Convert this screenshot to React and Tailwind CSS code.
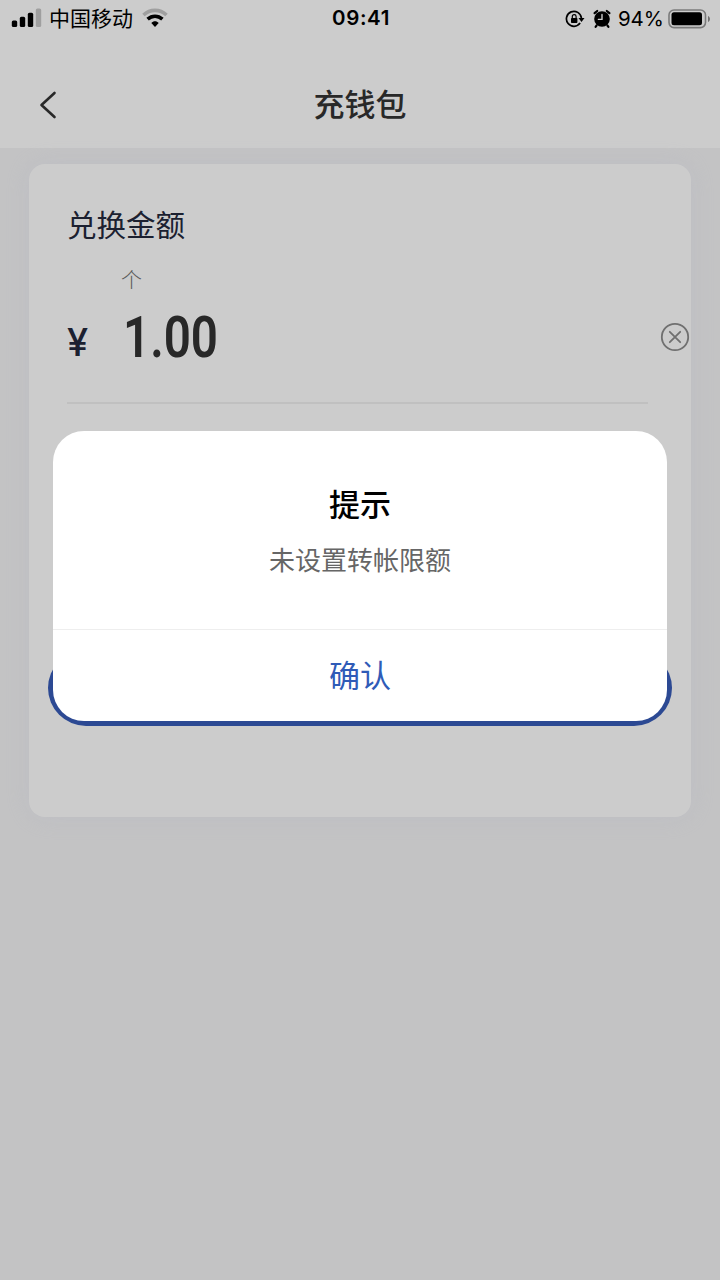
import { useState } from 'react';

export default function App() {
  const [amount, setAmount] = useState('1.00');
  const [open, setOpen] = useState(true);

  return (
    <div className="relative h-[1280px] w-[720px] overflow-hidden bg-[#f4f4f5] font-['Inter','Noto_Sans_CJK_SC',sans-serif]">
      <StatusBar />
      <NavBar title="充钱包" />
      <main className="px-[29px] pt-4">
        <section className="flex h-[653px] flex-col rounded-2xl bg-white pl-[38px] shadow-[0_0_24px_rgba(225,228,245,0.3)]">
          <h2 className="mt-[39px] h-11 text-[29.5px] leading-[44px] text-[#24293c]">兑换金额</h2>
          <span className="ml-[54px] mt-[17px] h-8 text-[21px] font-light leading-[32px] text-[#707070]">个</span>
          <div className="mt-px flex h-20 items-center pr-px">
            <span className="w-[56px] pt-[9px] text-[38px] font-medium leading-[40px] text-[#24293c]">¥</span>
            <span className="flex-1">
              <span className="inline-block origin-left scale-x-[0.82] font-['Roboto',sans-serif] text-[58px] font-semibold leading-[80px] text-[#333]">
                {amount}
              </span>
            </span>
            <button onClick={() => setAmount('')}>
              <ClearIcon />
            </button>
          </div>
          <div className="mr-[43px] mt-[25px] h-0.5 bg-[#f1f1f1]" />
          <button aria-label="确认" className="-ml-[19px] mr-[19px] mt-[246px] h-[76px] rounded-full bg-[#385cb8]" />
        </section>
      </main>
      {open && <Alert title="提示" message="未设置转帐限额" onConfirm={() => setOpen(false)} />}
    </div>
  );
}

function StatusBar() {
  return (
    <div className="grid h-10 grid-cols-3 items-center bg-white pl-[11px] pr-[9px] text-black">
      <div className="mb-[3px] flex items-center">
        <SignalIcon />
        <span className="ml-[7px] mr-[9px] text-[21px] leading-[36px]">中国移动</span>
        <WifiIcon />
      </div>
      <span className="mb-[3px] text-center text-[20.5px] font-semibold leading-none tracking-[0.6px]">09:41</span>
      <div className="mb-[3px] flex items-center justify-end">
        <RotationLockIcon />
        <AlarmIcon />
        <span className="ml-[7px] mr-1 text-[20.5px] leading-[36px]">94%</span>
        <BatteryIcon />
      </div>
    </div>
  );
}

function NavBar({ title }) {
  return (
    <header className="grid h-[108px] grid-cols-3 items-center bg-white px-[39px] pt-[22px]">
      <button className="justify-self-start">
        <svg width="18" height="28" viewBox="0 0 18 28" fill="none" stroke="#333" strokeWidth="2.6" strokeLinecap="round" strokeLinejoin="round">
          <path d="M15.5 2L2.5 14L15.5 26" />
        </svg>
      </button>
      <h1 className="text-center text-[31px] font-medium leading-[44px] text-[#333]">{title}</h1>
    </header>
  );
}

function Alert({ title, message, onConfirm }) {
  return (
    <div className="absolute inset-0 flex items-start justify-center bg-black/20">
      <div className="mt-[431px] flex h-[290px] w-[614px] flex-col rounded-[31px] bg-white text-center">
        <div className="flex-1 pt-[51px]">
          <h3 className="text-[31px] font-medium leading-[46px] text-black">{title}</h3>
          <p className="mt-3.5 text-[26px] leading-[38px] text-[#666]">{message}</p>
        </div>
        <button onClick={onConfirm} className="h-[92px] border-t border-[#eee] pt-0.5 text-[31px] text-[#2f5bb7]">
          确认
        </button>
      </div>
    </div>
  );
}

function ClearIcon() {
  return (
    <svg width="30" height="30" viewBox="0 0 30 30" fill="none" stroke="#8c8c8c" strokeWidth="1.8" strokeLinecap="round">
      <circle cx="15" cy="15" r="13.2" />
      <path d="M9.8 9.8L20.2 20.2M20.2 9.8L9.8 20.2" />
    </svg>
  );
}

function SignalIcon() {
  return (
    <svg width="31" height="20" viewBox="0 0 31 20" className="mb-0.5">
      <rect x="0.8" y="12.5" width="5.4" height="6.5" rx="1.6" />
      <rect x="8.8" y="8.8" width="5.4" height="10.2" rx="1.6" />
      <rect x="16.8" y="4.8" width="5.4" height="14.2" rx="1.6" />
      <rect x="24.8" y="0.5" width="5.4" height="18.5" rx="1.6" opacity="0.22" />
    </svg>
  );
}

function WifiIcon() {
  return (
    <svg width="26" height="20" viewBox="0 0 26 20" fill="none" stroke="#000" strokeWidth="3.6" className="mb-0.5">
      <path d="M1.5 7C8 0.8 18 0.8 24.5 7" opacity="0.22" />
      <path d="M5.6 11.2C10 7.2 16 7.2 20.4 11.2" />
      <path d="M9.3 15C11.5 12.8 14.5 12.8 16.7 15L13 19Z" fill="#000" stroke="none" />
    </svg>
  );
}

function RotationLockIcon() {
  return (
    <svg width="20" height="18" viewBox="0 0 20 18" fill="none" stroke="#000" strokeWidth="1.7">
      <path d="M15.1 13.1A7.5 7.5 0 1 1 16.4 8" />
      <path d="M13.5 8H19.5L16.5 12Z" fill="#000" stroke="none" />
      <rect x="6" y="8" width="6.4" height="5" rx="0.8" fill="#000" stroke="none" />
      <path d="M7.3 8.5V6.5A1.9 1.9 0 0 1 11.1 6.5V8.5" strokeWidth="1.2" />
    </svg>
  );
}

function AlarmIcon() {
  return (
    <svg width="18" height="20" viewBox="0 0 18 20" fill="none" strokeLinecap="round" className="ml-2">
      <circle cx="9" cy="10" r="7.8" fill="#000" />
      <path d="M1.6 4.2L4.2 2M16.4 4.2L13.8 2M3.6 16.5L2.6 17.8M14.4 16.5L15.4 17.8" stroke="#000" strokeWidth="2.2" />
      <path d="M9 5.4V10.4H5.4" stroke="#fff" strokeWidth="1.4" />
    </svg>
  );
}

function BatteryIcon() {
  return (
    <svg width="43" height="20" viewBox="0 0 43 20">
      <rect x="1" y="1" width="36.5" height="17.6" rx="5" fill="none" stroke="#000" strokeOpacity="0.4" strokeWidth="1.6" />
      <rect x="3.5" y="3.3" width="30.5" height="13" rx="2.5" />
      <path d="M40 7C42.6 8 42.6 12 40 13Z" opacity="0.45" />
    </svg>
  );
}
